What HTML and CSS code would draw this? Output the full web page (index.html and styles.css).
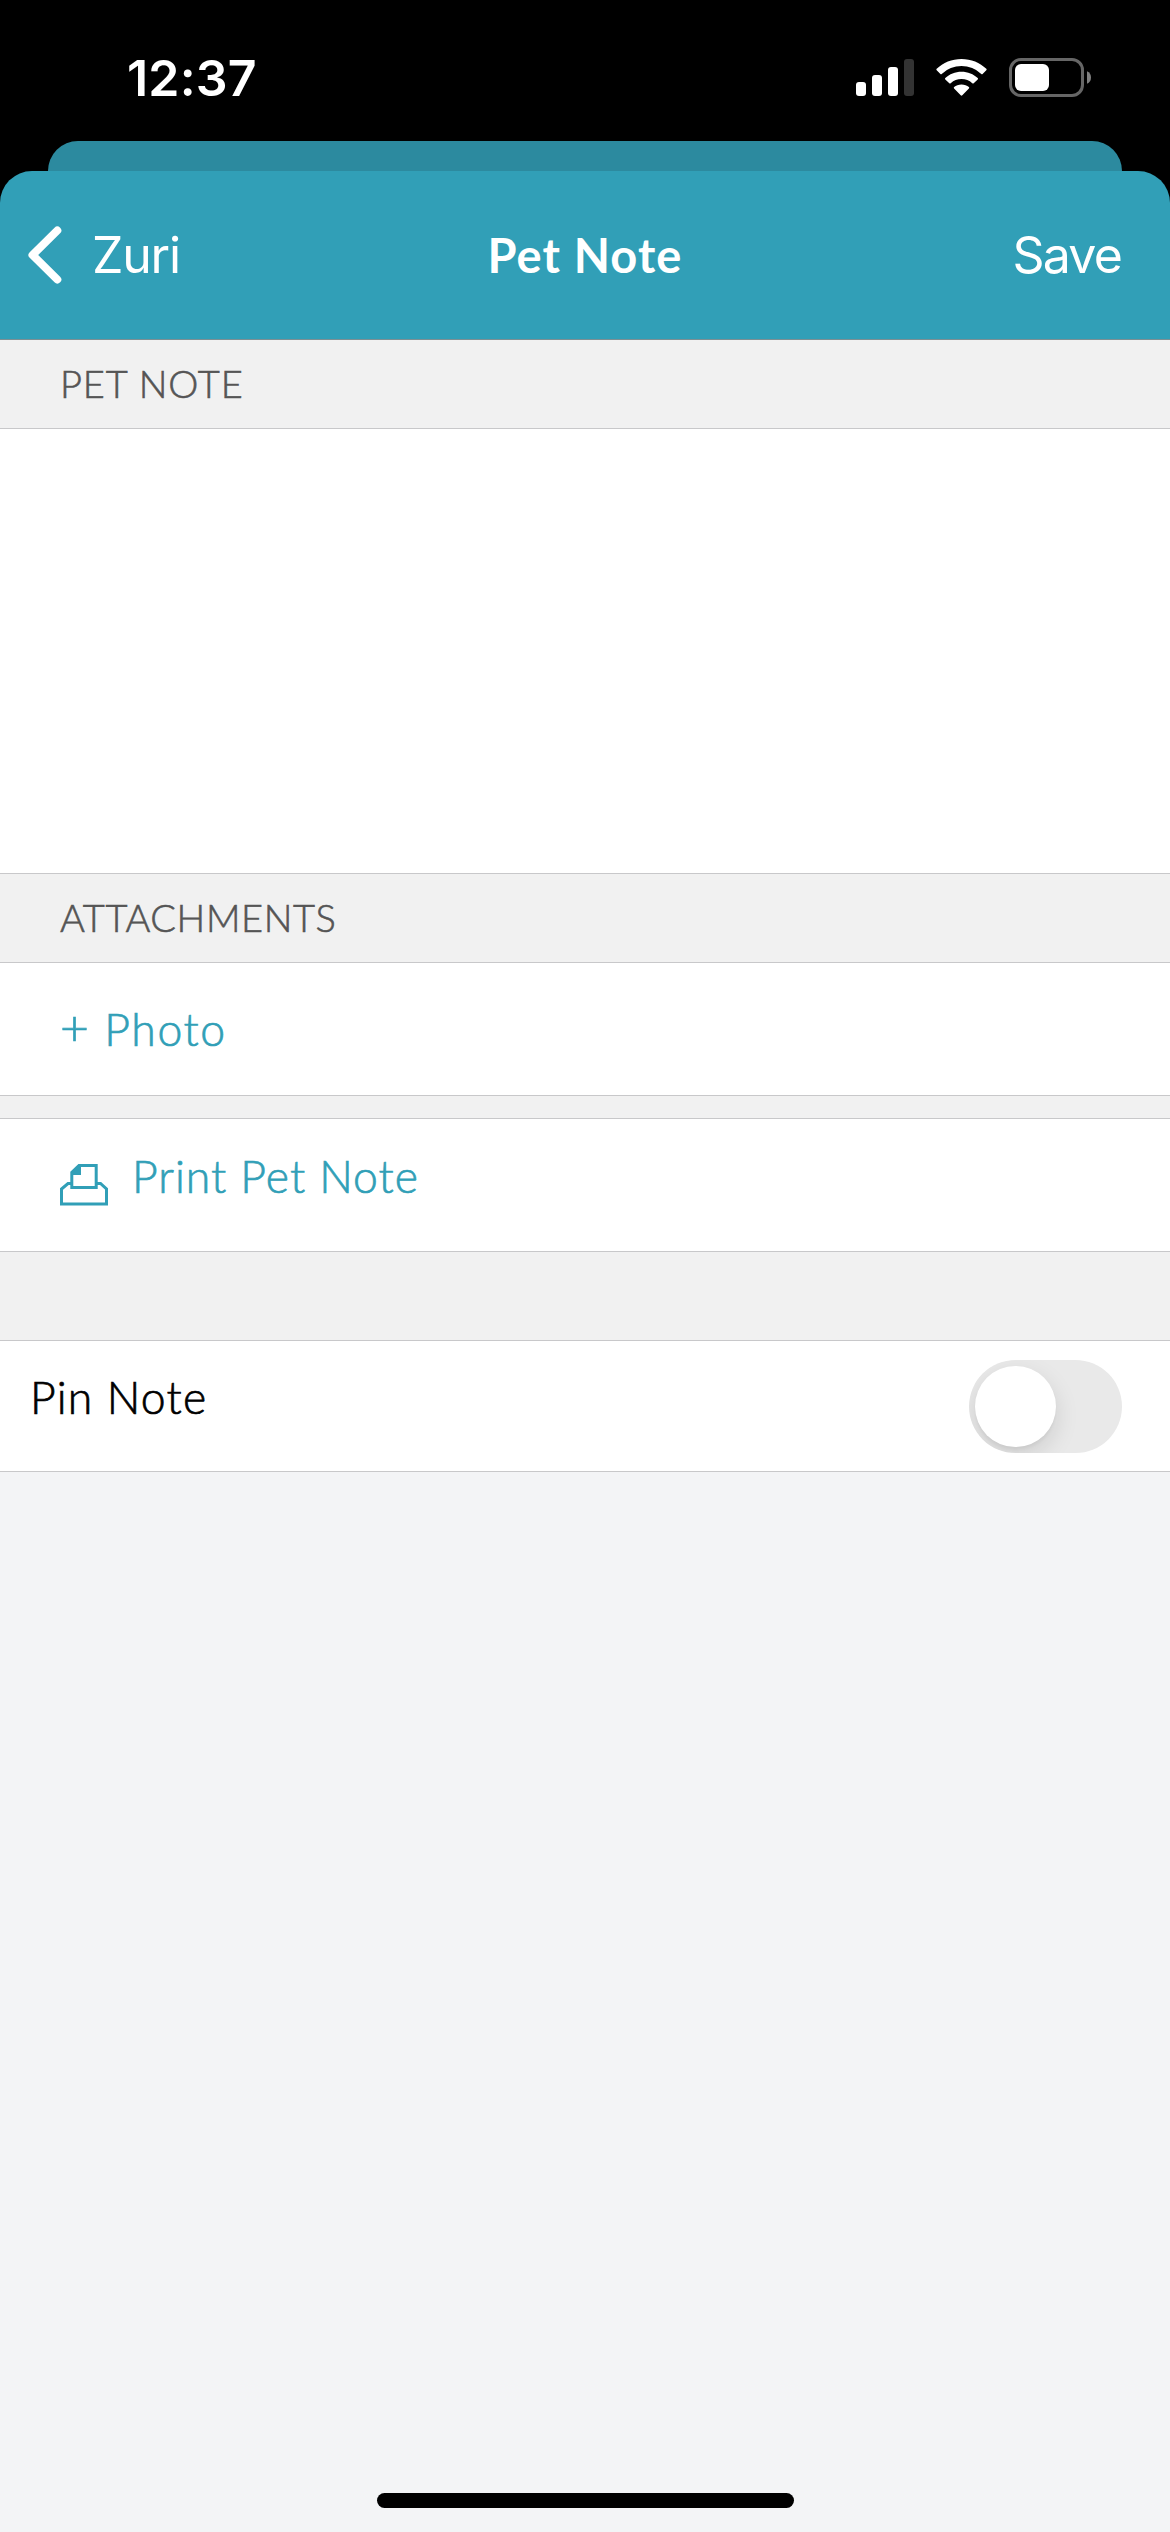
FILE: index.html
```html
<!DOCTYPE html>
<html lang="en">
<head>
<meta charset="utf-8">
<title>Pet Note</title>
<link rel="stylesheet" href="styles.css">
</head>
<body>
<div class="screen">
  <div class="status-bar">
    <span class="time">12:37</span>
    <div class="status-icons">
      <svg width="58" height="39" viewBox="0 0 58 39" fill="#fff">
        <rect x="0" y="24" width="10" height="14" rx="3"/>
        <rect x="16" y="17" width="10" height="21" rx="3"/>
        <rect x="32" y="9" width="10" height="29" rx="3"/>
        <rect x="48" y="1" width="10" height="37" rx="3" fill="#333"/>
      </svg>
      <svg width="51" height="39" viewBox="0 0 51 39" fill="#fff">
        <path d="M25.5 1C35 1 44 4.700 50.300 10.800Q51 11.500 50.300 12.200L46.600 15.900Q46 16.500 45.300 15.900A29 29 0 0 0 5.700 15.900Q5 16.500 4.400 15.900L.7 12.200Q0 11.500 .7 10.800C7 4.700 16 1 25.500 1Z"/>
        <path d="M25.500 13.700C31.800 13.700 37.500 16 41.700 20Q42.400 20.700 41.700 21.400L37.700 25.300Q37 25.900 36.300 25.300A16 16 0 0 0 14.700 25.300Q14 25.900 13.300 25.300L9.300 21.400Q8.600 20.700 9.300 20C13.500 16 19.200 13.700 25.500 13.700Z"/>
        <path d="M25.500 26.500C28.400 26.500 31 27.500 32.900 29Q33.600 29.700 32.900 30.400L26.300 37.300Q25.500 38.100 24.700 37.300L18.100 30.400Q17.400 29.700 18.100 29C20 27.500 22.600 26.500 25.500 26.500Z"/>
      </svg>
      <svg width="82" height="39" viewBox="0 0 82 39">
        <rect x="1.500" y="1.500" width="72" height="36" rx="10.500" fill="none" stroke="#666" stroke-width="3"/>
        <rect x="6" y="6" width="34" height="27" rx="6" fill="#fff"/>
        <path d="M78 13.300Q82 15 82 19.500T78 25.700Z" fill="#808080"/>
      </svg>
    </div>
  </div>
  <div class="sheet-behind"></div>
  <header class="nav">
    <div class="nav-back">
      <svg width="34" height="58" viewBox="0 0 34 58" fill="none" stroke="#fff" stroke-width="8" stroke-linecap="round" stroke-linejoin="round"><path d="M29.300 4.500L4.500 29L29.300 53.500"/></svg>
      <span class="nav-action back-label">Zuri</span>
    </div>
    <h1 class="nav-title">Pet Note</h1>
    <span class="nav-action save">Save</span>
  </header>
  <main class="content">
    <h2 class="section-title pet-note">PET NOTE</h2>
    <div class="note-field"></div>
    <h2 class="section-title attachments">ATTACHMENTS</h2>
    <div class="row link photo"><span><span class="plus">+</span> Photo</span></div>
    <div class="spacer spacer-small"></div>
    <div class="row link print">
      <svg width="48" height="42" viewBox="0 0 48 42" fill="none" stroke="currentColor" stroke-width="3"><path d="M11 19.500H8L1.500 25V40H46.500V25L40.500 19.500H37"/><path d="M11.800 24V8.500L19 1.500H36.200V23.500H10.300"/><path d="M11 11V8.500L18.500 1H21V11Z" fill="currentColor" stroke="none"/></svg>
      <span>Print Pet Note</span>
    </div>
    <div class="spacer spacer-large"></div>
    <div class="row pin">
      <span class="pin-label">Pin Note</span>
      <div class="toggle"><div class="knob"></div></div>
    </div>
  </main>
  <footer class="home"><div class="home-indicator"></div></footer>
</div>
</body>
</html>
```
FILE: styles.css
```css
* { box-sizing: border-box; }
body { margin: 0; background: #000; }
svg { display: block; flex: none; }
.screen {
  width: 1170px;
  height: 2532px;
  display: flex;
  flex-direction: column;
  font-family: Lato, sans-serif;
  overflow: hidden;
}
.status-bar {
  height: 141px;
  padding: 48px 79px 0 127px;
  display: flex;
  justify-content: space-between;
  align-items: flex-start;
  color: #fff;
}
.time {
  font: 600 50px/60px Inter, sans-serif;
  letter-spacing: 0.2px;
}
.status-icons { display: flex; gap: 22px; padding-top: 10px; }
.sheet-behind {
  height: 30px;
  margin: 0 48px;
  border-radius: 30px 30px 0 0;
  background: #2c8a9f;
}
.nav {
  height: 169px;
  padding: 0 28px;
  display: grid;
  grid-template-columns: 1fr auto 1fr;
  align-items: center;
  color: #fff;
  background: #319fb7;
  border-bottom: 1px solid #7d8f93;
  border-radius: 32px 32px 0 0;
}
.nav-back { display: flex; align-items: center; gap: 30px; }
.nav-action { font: 400 50px/60px Inter, sans-serif; letter-spacing: -1.8px; white-space: nowrap; }
.back-label { letter-spacing: -1.2px; }
.save { justify-self: end; margin-right: 21px; }
.nav-title { margin: 0; font-size: 47px; line-height: 60px; font-weight: 700; letter-spacing: 1.1px; }
.content { color: #000; }
.section-title {
  margin: 0;
  height: 89px;
  padding-left: 60px;
  font-size: 38px;
  line-height: 87px;
  font-weight: 300;
  letter-spacing: 0.6px;
  -webkit-text-stroke: 0.6px currentColor;
  color: #555;
  background: #f1f1f1;
  border-bottom: 1px solid #c8c8ca;
}
.pet-note { letter-spacing: 0.9px; }
.note-field { height: 445px; background: #fff; border-bottom: 1px solid #c8c8ca; }
.row {
  height: 133px;
  display: flex;
  align-items: center;
  font-size: 44.500px;
  line-height: 60px;
  font-weight: 300;
  letter-spacing: 1px;
  -webkit-text-stroke: 0.7px currentColor;
  background: #fff;
  border-bottom: 1px solid #c8c8ca;
}
.link { padding-left: 60px; color: #319fb7; }
.photo { letter-spacing: 1.6px; }
.plus { font-size: 50px; line-height: 1; }
.print { gap: 24px; }
.print span { padding-bottom: 18px; }
.spacer { background: #f1f1f1; border-bottom: 1px solid #c8c8ca; }
.spacer-small { height: 23px; }
.spacer-large { height: 89px; }
.pin { height: 131px; padding: 0 48px 0 30px; justify-content: space-between; letter-spacing: 1.2px; }
.pin-label { padding-bottom: 18px; }
.toggle {
  width: 153px;
  height: 93px;
  padding: 6px;
  border-radius: 47px;
  background: #e9e9e9;
  overflow: hidden;
}
.knob {
  width: 81px;
  height: 81px;
  border-radius: 50%;
  background: #fff;
  box-shadow: 0 9px 24px rgba(0, 0, 0, 0.12), 0 3px 3px rgba(0, 0, 0, 0.04);
}
.home {
  flex: 1;
  display: flex;
  justify-content: center;
  align-items: flex-end;
  padding: 0 0 24px 1px;
  background: #f3f4f6;
}
.home-indicator { width: 417px; height: 15px; border-radius: 8px; background: #000; }
```
